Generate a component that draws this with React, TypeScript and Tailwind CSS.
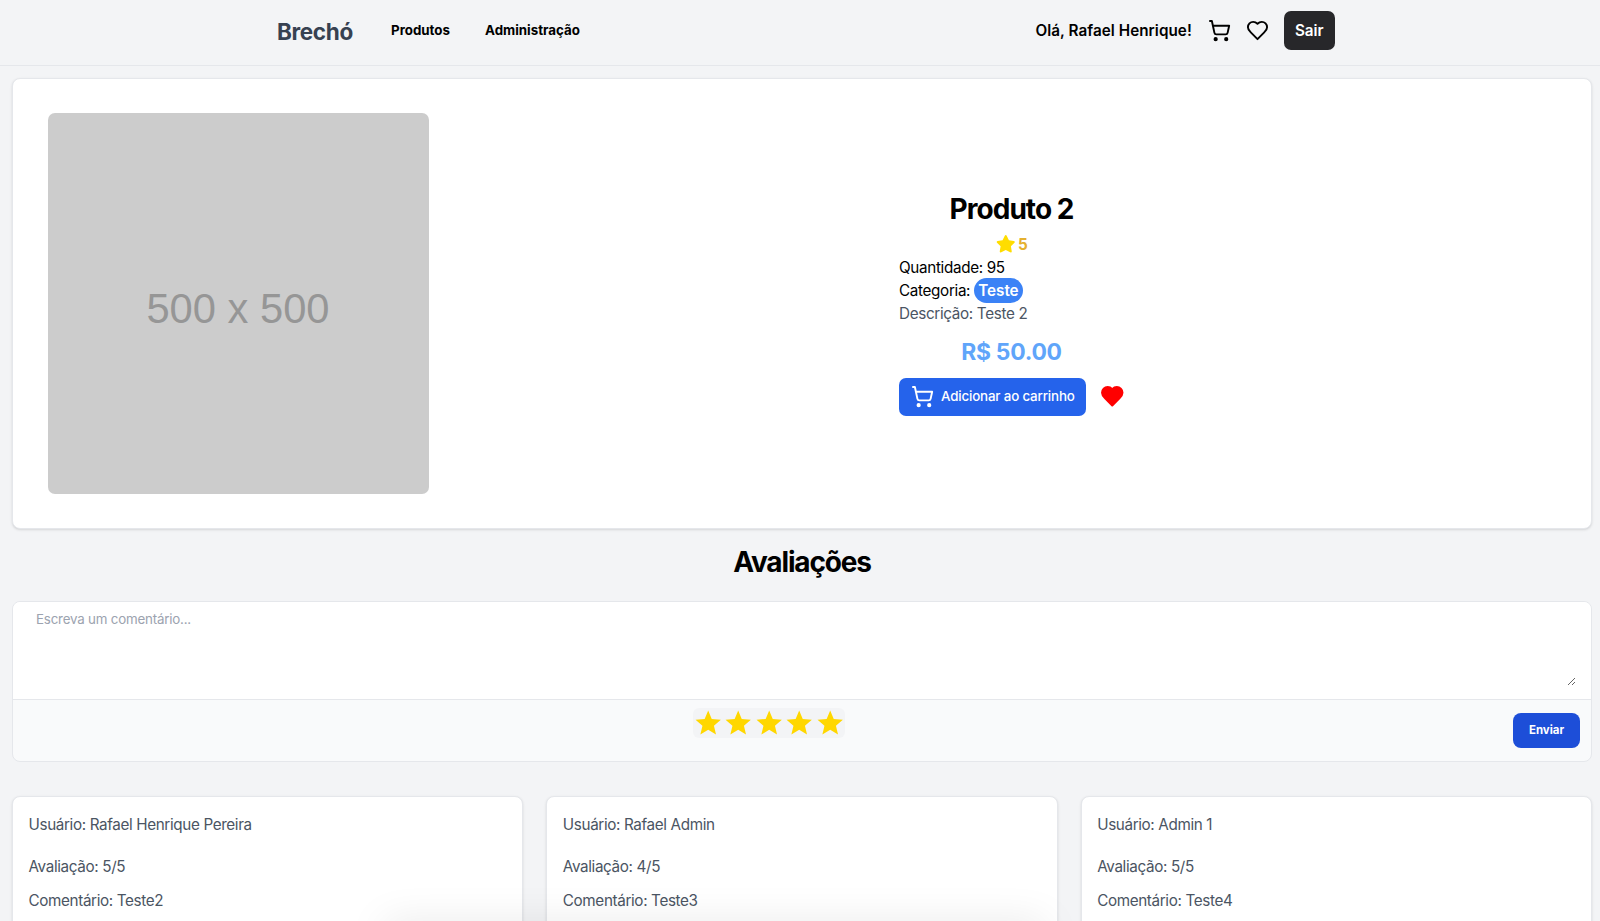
import { FaStar } from "react-icons/fa";
import { MdStar } from "react-icons/md";

const reviews = [
  { user: "Rafael Henrique Pereira", rating: 5, comment: "Teste2" },
  { user: "Rafael Admin", rating: 4, comment: "Teste3" },
  { user: "Admin 1", rating: 5, comment: "Teste4" },
];

function CartIcon({ className }: { className: string }) {
  return (
    <svg className={className} viewBox="0 0 24 24" fill="none" stroke="currentColor" strokeWidth="2" strokeLinecap="round" strokeLinejoin="round">
      <path d="M2.05 2.05h2l2.66 12.42a2 2 0 0 0 2 1.58h9.78a2 2 0 0 0 1.95-1.57l1.65-7.43H5.12" />
      <circle cx="8" cy="21" r="1.2" fill="currentColor" />
      <circle cx="19" cy="21" r="1.2" fill="currentColor" />
    </svg>
  );
}

function HeartIcon({ className }: { className: string }) {
  return (
    <svg className={className} viewBox="0 0 24 24" stroke="currentColor" strokeWidth="2" strokeLinecap="round" strokeLinejoin="round">
      <path d="M19 14c1.49-1.46 3-3.21 3-5.5A5.5 5.5 0 0 0 16.5 3c-1.76 0-3 .5-4.5 2-1.5-1.5-2.74-2-4.5-2A5.5 5.5 0 0 0 2 8.5c0 2.3 1.5 4.05 3 5.5l7 7Z" />
    </svg>
  );
}

function Header() {
  return (
    <header className="flex h-[66px] shrink-0 items-start border-b border-gray-200 pl-[277px] pt-[11px]">
      <div className="flex h-[39px] w-[1058px] items-center">
        <span className="w-[114px] pt-[2px] text-[22.5px] font-bold tracking-[-0.35px] text-[#374151]">Brechó</span>
        <nav className="flex flex-1 pt-px text-[13.33px] font-bold">
          <a className="w-[94px]">Produtos</a>
          <a>Administração</a>
        </nav>
        <span className="w-[172px] pt-[2px] text-[15.24px] font-semibold tracking-[0.05px] whitespace-nowrap">Olá, Rafael Henrique!</span>
        <CartIcon className="size-[23px] shrink-0" />
        <HeartIcon className="ml-[15px] size-[23px] shrink-0 fill-none" />
        <button className="ml-[15px] h-[39px] w-[51.5px] shrink-0 rounded-[7px] bg-[#27272a] pt-[1px] text-[15.24px] font-semibold text-white">Sair</button>
      </div>
    </header>
  );
}

function Product() {
  return (
    <section className="mr-[8px] ml-[12px] mt-[12px] flex h-[451px] shrink-0 items-center rounded-[8px] border border-gray-200 bg-white pl-[34.5px] shadow-sm">
      <div className="flex size-[381px] items-center justify-center rounded-[7px] bg-[#cccccc] pt-[11px] font-['Liberation_Sans',sans-serif] text-[41.7px] text-[#969696]">
        500 x 500
      </div>
      <div className="ml-[470.5px] flex w-[225px] flex-col">
        <h1 className="text-center text-[28px] leading-[34px] font-bold tracking-[-0.95px]">Produto 2</h1>
        <div className="mt-[7px] flex h-[23px] items-center justify-center gap-[2px] pl-[1px] text-[15.24px] font-bold text-[#e5b030]">
          <FaStar className="size-[19.5px] text-[#ffdd00]" />
          <span className="pt-[2px]">5</span>
        </div>
        <div className="text-[15.24px] leading-[23px] tracking-[-0.33px]">
          <p>Quantidade: 95</p>
          <p>Categoria: <span className="rounded-full bg-[#3b82f6] px-[4px] py-[3px] font-semibold tracking-normal text-white">Teste</span></p>
          <p className="text-[#4b5563]">Descrição: Teste 2</p>
        </div>
        <p className="mt-[12px] text-center text-[22.86px] leading-[30px] font-bold tracking-[-0.25px] text-[#60a5fa]">R$ 50.00</p>
        <div className="mt-[11px] flex items-center">
          <button className="flex h-[38px] w-[187px] shrink-0 items-center rounded-[7px] bg-[#2563eb] pl-[12px] text-[13.33px] font-medium tracking-[-0.16px] whitespace-nowrap text-white">
            <CartIcon className="mr-[7px] size-[23px]" />
            <span className="pt-[1px]">Adicionar ao carrinho</span>
          </button>
          <HeartIcon className="ml-[14px] size-[24.5px] shrink-0 fill-current text-[#ff0000]" />
        </div>
      </div>
    </section>
  );
}

function ReviewForm() {
  return (
    <form className="mr-[8px] ml-[12px] mt-[18px] flex h-[161px] shrink-0 flex-col overflow-hidden rounded-[8px] border border-gray-200 bg-[#f9fafb]">
      <div className="flex h-[98px] flex-col border-b border-gray-200 bg-white pt-[7px] pr-[15px] pl-[15px]">
        <textarea
          className="block h-[77px] w-full resize-y bg-white px-[8px] text-[13.33px] leading-[20px] tracking-[-0.2px] outline-none placeholder:text-[#9ca3af]"
          placeholder="Escreva um comentário..."
        />
      </div>
      <div className="flex flex-1 items-start">
        <div className="mt-[8px] ml-[680px] flex h-[30px] w-[152px] items-center rounded-[6px] bg-[#f3f4f6]">
          {[0, 1, 2, 3, 4].map((n) => (
            <MdStar key={n} className="size-[30.4px] shrink-0 text-[#ffd700]" />
          ))}
        </div>
        <button type="button" className="mt-[13px] mr-[11px] ml-auto h-[35px] w-[67px] rounded-[8px] bg-[#1d4ed8] pt-px text-[11.43px] font-bold text-white">Enviar</button>
      </div>
    </form>
  );
}

export default function App() {
  return (
    <div className="relative flex h-[921px] flex-col overflow-hidden bg-gray-100 font-[Inter,sans-serif] text-black">
      <Header />
      <Product />
      <h2 className="mt-[16px] h-[38px] shrink-0 pl-[4px] text-center text-[28px] leading-[34px] font-bold tracking-[-1.15px]">Avaliações</h2>
      <ReviewForm />
      <div className="mr-[8px] ml-[12px] mt-[34px] grid shrink-0 grid-cols-3 gap-[23px]">
        {reviews.map((r) => (
          <article key={r.user} className="h-[160px] rounded-[8px] border border-gray-200 bg-white px-[15.5px] pt-[16px] text-[15.24px] leading-[23px] tracking-[-0.36px] text-[#4b5563] shadow-sm">
            <p>Usuário: {r.user}</p>
            <p className="mt-[19px]">Avaliação: {r.rating}/5</p>
            <p className="mt-[11px]">Comentário: {r.comment}</p>
          </article>
        ))}
      </div>
      <div className="absolute -bottom-[24px] left-[385px] h-[20px] w-[660px] shadow-[0_0_40px_rgba(0,0,0,0.13)]" />
    </div>
  );
}
